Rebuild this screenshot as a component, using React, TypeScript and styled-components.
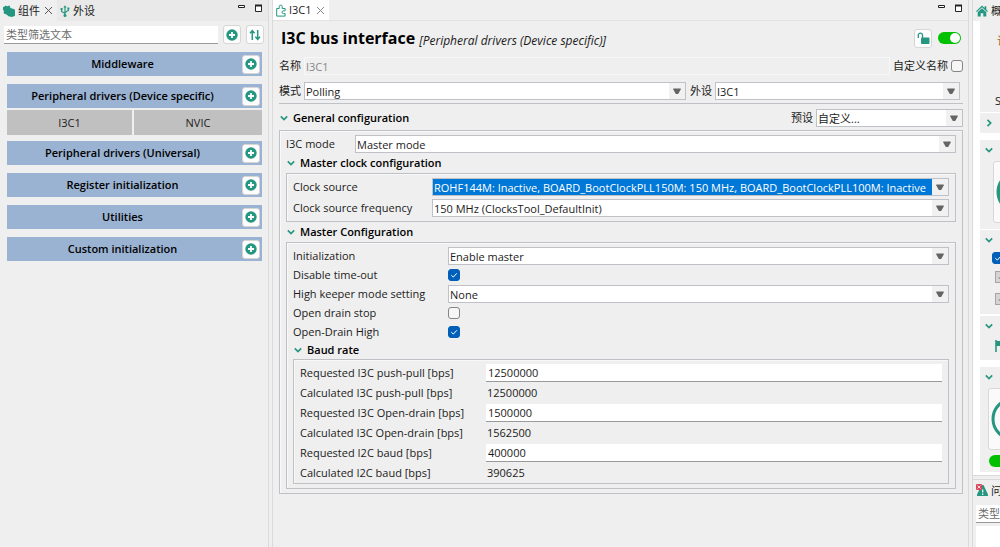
import React, { useId, useState } from "react";
import styled, { createGlobalStyle, css } from "styled-components";

const teal = "#259780";
const line = "#c0c1c6";
const face = "#efefef";

const GlobalStyle = createGlobalStyle`
  * { box-sizing: border-box; }
  body {
    margin: 0;
    background: ${face};
    color: #1b1b1b;
    font-family: "Open Sans", "Noto Sans CJK SC", sans-serif;
    font-size: 11px;
    line-height: 16px;
  }
  button, input, select { font: inherit; color: inherit; margin: 0; }
  h1, h2, h3 { margin: 0; font-weight: 700; color: #000; }
`;

const Workbench = styled.div`
  display: grid;
  grid-template-columns: 269px minmax(0, 1fr) 28px;
  column-gap: 3px;
  min-height: 100vh;
  overflow: hidden;
  background: ${face};
`;

const Panel = styled.section`
  min-width: 0;
  display: flex;
  flex-direction: column;
  border-right: 1px solid #dadada;
`;

const MainPanel = styled(Panel)`
  border-left: 1px solid #dadada;
`;

const TabBar = styled.div`
  display: flex;
  align-items: stretch;
  height: 21px;
  flex: none;
  background: #e9e9e9;
`;

const EditorTabBar = styled(TabBar)`
  background: ${face};
  border-bottom: 1px solid #e2e2e2;
`;

const Tab = styled.div<{ $fill?: string }>`
  display: flex;
  align-items: center;
  gap: 3px;
  padding: 0 4px 0 3px;
  white-space: nowrap;
  background: ${(p) => p.$fill ?? "transparent"};
  svg { flex: none; }
`;

const TabClose = styled.button`
  display: flex;
  padding: 0;
  margin-left: 1px;
  border: 0;
  background: none;
`;

const WindowButtons = styled.div`
  display: flex;
  gap: 8px;
  margin-left: auto;
  padding: 4px 5px 0 0;
`;

const WindowButton = styled.button`
  width: 9px;
  height: 10px;
  padding: 0;
  border: 0;
  background: none;
  display: flex;
`;

const FilterRow = styled.div`
  display: flex;
  align-items: center;
  gap: 5px;
  padding: 4px 4px 0;
`;

const TextField = styled.input`
  min-width: 0;
  width: 100%;
  height: 18px;
  padding: 0 2px;
  border: 0;
  border-bottom: 1px solid #9a9a9a;
  background: #fff;
  outline: 0;
  &::placeholder { color: #6d6d6d; opacity: 1; }
`;

const IconButton = styled.button`
  flex: none;
  display: flex;
  align-items: center;
  justify-content: center;
  width: 18px;
  height: 19px;
  padding: 0;
  border: 1px solid #d6d6d6;
  border-radius: 3px;
  background: #fdfdfd;
`;

const GroupList = styled.div`
  display: flex;
  flex-direction: column;
  gap: 8px;
  padding: 8px 6px 8px 7px;
`;

const GroupHeader = styled.header`
  display: flex;
  align-items: center;
  gap: 6px;
  height: 24px;
  padding: 0 2px;
  background: #9ab3d2;
  h2 {
    flex: 1;
    text-align: center;
    font-size: 11px;
    font-weight: 600;
  }
`;

const GroupItems = styled.div`
  display: grid;
  grid-template-columns: 125px 1fr;
  gap: 2px;
  padding: 2px 0 0;
  margin-bottom: -2px;
`;

const GroupItem = styled.button`
  height: 25px;
  padding: 0;
  border: 0;
  background: #c0c0c0;
`;

const Editor = styled.div`
  padding: 0 5px 0 6px;
`;

const TitleRow = styled.div`
  display: flex;
  align-items: center;
  gap: 4px;
  height: 34px;
  padding: 0 2px;
  margin-bottom: 2px;
  h1 { font-size: 16px; line-height: 24px; }
`;

const Subtitle = styled.em`
  flex: 1;
  padding-top: 6px;
  font-size: 12px;
`;

const Toggle = styled.button`
  flex: none;
  display: flex;
  justify-content: flex-end;
  width: 23px;
  height: 12px;
  padding: 1px;
  margin-left: 2px;
  border: 0;
  border-radius: 6px;
  background: #00c000;
  span {
    width: 10px;
    height: 10px;
    border-radius: 5px;
    background: #fff;
  }
`;

const FieldRow = styled.div<{ $gap?: number }>`
  display: flex;
  align-items: center;
  gap: 3px;
  height: 18px;
  margin-bottom: ${(p) => p.$gap ?? 0}px;
  white-space: nowrap;
`;

const ReadonlyField = styled.input`
  flex: 1;
  min-width: 0;
  height: 18px;
  padding: 0 1px;
  border: 1px solid #f7f7f7;
  background: transparent;
  color: #878787;
`;

const SelectFrame = styled.div`
  position: relative;
  display: flex;
  flex: 1;
  min-width: 0;
  svg {
    position: absolute;
    right: 5px;
    top: 6px;
    pointer-events: none;
  }
`;

const SelectControl = styled.select<{ $marked?: boolean }>`
  appearance: none;
  width: 100%;
  height: 18px;
  padding: 0 16px 0 1px;
  line-height: 15px;
  border: 1px solid ${line};
  border-radius: 0;
  outline: 0;
  background: linear-gradient(to left, #f1f1f1 16px, ${(p) => (p.$marked ? "#0078d7" : "#fff")} 16px);
  ${(p) => p.$marked && css`color: #fff;`}
  option { color: #1b1b1b; background: #fff; }
`;

const Rule = styled.hr`
  height: 1px;
  margin: 3px 0 5px;
  border: 0;
  background: ${line};
`;

const SectionTitle = styled.div<{ $height: number }>`
  display: flex;
  align-items: center;
  height: ${(p) => p.$height}px;
  h2 { flex: 1; font-size: 11px; font-weight: 600; }
`;

const Twisty = styled.button`
  display: flex;
  flex: none;
  padding: 0 5px 0 1px;
  border: 0;
  background: none;
`;

const PresetField = styled.div`
  display: flex;
  align-items: center;
  gap: 3px;
  width: 172px;
  white-space: nowrap;
`;

const PeripheralField = styled.div`
  display: flex;
  align-items: center;
  gap: 3px;
  width: 270px;
  margin-left: 1px;
  margin-right: 3px;
`;

const Frame = styled.div<{ $bottom: number }>`
  padding: 4px 6px ${(p) => p.$bottom}px;
  border: 1px solid ${line};
  box-shadow: inset 1px 1px 0 #f8f8f8;
`;

const GeneralFrame = styled(Frame)`
  margin-top: 3px;
`;

const PropertyGrid = styled.div<{ $label: number; $gap: number }>`
  display: grid;
  grid-template-columns: ${(p) => p.$label}px minmax(0, 1fr);
  row-gap: ${(p) => p.$gap}px;
  align-items: center;
  white-space: nowrap;
`;

const ValueCell = styled.div`
  display: flex;
  align-items: center;
  height: 18px;
`;

const Output = styled.output`
  padding-left: 1px;
  line-height: 18px;
`;

const CheckInput = styled.input`
  appearance: none;
  flex: none;
  width: 12px;
  height: 12px;
  border: 1px solid #858585;
  border-radius: 3px;
  background: #f6f6f6;
  &:checked {
    border-color: #005fb8;
    background: #005fb8
      url("data:image/svg+xml,%3Csvg xmlns='http://www.w3.org/2000/svg' viewBox='0 0 10 10'%3E%3Cpath d='M2.3 5.2l2 1.9 3.5-3.8' fill='none' stroke='white'/%3E%3C/svg%3E");
  }
`;

const Side = styled.aside`
  display: flex;
  flex-direction: column;
  min-width: 0;
  overflow: hidden;
  border-left: 1px solid #dadada;
`;

const Overview = styled.div`
  display: flex;
  flex-direction: column;
  padding: 0 0 3px 7px;
  background: #fff;
  border-bottom: 1px solid #dadada;
`;

const SideSection = styled.section<{ $height: number; $gap: number }>`
  height: ${(p) => p.$height}px;
  margin-bottom: ${(p) => p.$gap}px;
  width: 240px;
  display: flex;
  flex-direction: column;
  align-items: flex-start;
  background: ${face};
`;

const SideHead = styled.button`
  display: flex;
  align-items: center;
  height: 20px;
  padding: 0 5px;
  border: 0;
  background: none;
  flex: none;
`;

const SideText = styled.span<{ $top: number; $left: number; $color?: string }>`
  padding: ${(p) => p.$top}px 0 0 ${(p) => p.$left}px;
  color: ${(p) => p.$color ?? "inherit"};
`;

const Card = styled.div<{ $left: number }>`
  display: flex;
  align-items: center;
  flex: none;
  width: 200px;
  height: 62px;
  margin: 1px 0 0 ${(p) => p.$left}px;
  padding-left: 2px;
  border: 1px solid #d8d8d8;
  border-radius: 3px;
  background: #fafafa;
`;

const SideStack = styled.div`
  display: flex;
  flex-direction: column;
  gap: 5px;
  padding: 2px 0 0 12px;
`;

const MiniButton = styled.button`
  width: 14px;
  height: 12px;
  margin: 2px 0 3px 3px;
  padding: 0 2px;
  border: 1px solid #a5a5a5;
  background: #d4d4d4;
  display: flex;
  align-items: center;
`;

const SideToggle = styled(Toggle)`
  margin: 5px 0 0 9px;
`;

const Problems = styled.div`
  flex: 1;
  display: flex;
  flex-direction: column;
  margin-top: 3px;
  border-top: 1px solid #dadada;
`;

const ProblemFilter = styled.div`
  width: 200px;
  padding: 4px 3px 3px;
`;

const ProblemTable = styled.div`
  flex: 1;
  width: 200px;
  margin-left: 3px;
  background: #fff;
`;

const PlusIcon = () => (
  <svg width="12" height="12" viewBox="0 0 12 12">
    <circle cx="6" cy="6" r="5.7" fill={teal} />
    <path d="M6 3v6M3 6h6" stroke="#fff" strokeWidth="1.8" />
  </svg>
);

const SortIcon = () => (
  <svg width="12" height="12" viewBox="0 0 12 12" fill="none" stroke={teal} strokeWidth="1.5">
    <path d="M3.3 11V2M1 4.2 3.3 1.7 5.6 4.2M8.7 1v9M6.4 7.8l2.3 2.5L11 7.8" />
  </svg>
);

const CloseIcon = ({ color = "#555" }: { color?: string }) => (
  <svg width="9" height="9" viewBox="0 0 9 9" fill="none" stroke={color}>
    <path d="M1 1l7 7M8 1l-7 7" />
  </svg>
);

const ComponentsIcon = () => (
  <svg width="12" height="12" viewBox="0 0 12 12" fill={teal}>
    <path d="M0 2 1.6 1.6 2.600 .6 4 1.300 6.600 .6 7.400 3 9 3.400 11.600 4.200 12 6v4.800L9 12 5.500 11.200 3.600 9.600 .8 8.400V5.600L0 5z" />
  </svg>
);

const UsbIcon = () => (
  <svg width="10" height="12" viewBox="0 0 10 12" fill="none" stroke={teal} strokeWidth="1.2">
    <path d="M5 10V2M5 8.6 1.6 6.5V4.4M5 7.4l3.4-2V3.6" />
    <path d="M3.4 2.6 5 .3l1.6 2.3zM.6 3h2v2h-2zM7.4 2.4h2v2h-2z" fill={teal} stroke="none" />
    <circle cx="5" cy="10.4" r="1.5" fill={teal} stroke="none" />
  </svg>
);

const PuzzleIcon = () => (
  <svg width="10" height="13" viewBox="0 0 10 13" fill="none" stroke={teal}>
    <path d="M.7 4.500h2.500V2.600Q3.200 1.200 4.700 1.200T6.200 2.600v1.900h2.900v2.300H7.500Q6 6.800 6 8.200t1.500 1.400h1.600v2.500H.7z" />
  </svg>
);

const MinimizeIcon = () => (
  <svg width="9" height="10" viewBox="0 0 9 10"><path d="M1.500 1.500h6v2h-6z" fill="#fff" stroke="#222" /></svg>
);

const MaximizeIcon = () => (
  <svg width="9" height="10" viewBox="0 0 9 10">
    <path d="M1.500 1.500h6v6h-6z" fill="#fff" stroke="#222" />
    <path d="M1 1.500h7" stroke="#222" strokeWidth="2" />
  </svg>
);

const UnlockIcon = () => (
  <svg width="13" height="13" viewBox="0 0 13 13">
    <path d="M1.300 6V3.300a2.100 2.100 0 0 1 4.200 0V6" fill="none" stroke={teal} strokeWidth="1.300" />
    <rect x="4" y="5.600" width="8.500" height="6.400" rx="1" fill={teal} />
  </svg>
);

const Chevron = ({ right }: { right?: boolean }) => (
  <svg width="8" height="8" viewBox="0 0 8 8" fill="none" stroke={teal} strokeWidth="1.700">
    <path d={right ? "M2.500 .8 5.700 4 2.500 7.200" : "M.8 2.400 4 5.500l3.200-3.100"} />
  </svg>
);

const GrayCheck = () => (
  <svg width="8" height="8" viewBox="0 0 8 8" fill="none" stroke="#555">
    <path d="M1 4.500l2 2 3.500-3.500" />
  </svg>
);

const DropArrow = () => (
  <svg width="8" height="7" viewBox="0 0 8 7"><path d="M.3.5h7.400v1L5.200 6H2.800L.3 1.500z" fill="#646464" /></svg>
);

const HomeIcon = () => (
  <svg width="12" height="12" viewBox="0 0 12 12" fill={teal}>
    <path d="M6 .4 8.600 2.900V1.200h1.700v3.400L12 6.200l-.9.9L6 2.300.9 7.100 0 6.200z" />
    <path d="M6 3.300 10.300 7.300V11.600H7.300V8.300H4.700v3.300h-3V7.300z" />
  </svg>
);

const ProblemIcon = () => (
  <svg width="12" height="13" viewBox="0 0 12 13">
    <path d="M5.500 1h2L12 10.500V12H1v-1.500z" fill={teal} />
    <path d="M6.700 5.500v3M6.700 9.500V11" stroke="#fff" strokeWidth="1.200" />
    <rect width="6" height="6" rx="1" fill="#d9485a" />
    <path d="M1.500 1.500l3 3M4.500 1.500l-3 3" stroke="#fff" strokeWidth=".8" />
  </svg>
);

const FlagIcon = () => (
  <svg width="14" height="12" viewBox="0 0 14 12">
    <path d="M1 0v12" stroke={teal} strokeWidth="1.600" />
    <path d="M1 1h12v7H7V6H1z" fill={teal} />
  </svg>
);

const Ring = ({ inner }: { inner?: boolean }) => (
  <svg width="44" height="44" viewBox="0 0 44 44">
    <circle cx="22" cy="22" r="20" fill={inner ? teal : "none"} stroke={teal} strokeWidth="3" />
  </svg>
);

function WindowControls() {
  return (
    <WindowButtons>
      <WindowButton aria-label="Minimize"><MinimizeIcon /></WindowButton>
      <WindowButton aria-label="Maximize"><MaximizeIcon /></WindowButton>
    </WindowButtons>
  );
}

function Dropdown({ id, value, marked }: { id: string; value: string; marked?: boolean }) {
  return (
    <SelectFrame>
      <SelectControl id={id} $marked={marked} defaultValue={value}>
        <option value={value}>{value}</option>
      </SelectControl>
      <DropArrow />
    </SelectFrame>
  );
}

function SelectProperty({ label, value, marked }: { label: string; value: string; marked?: boolean }) {
  const id = useId();
  return (
    <>
      <label htmlFor={id}>{label}</label>
      <Dropdown id={id} value={value} marked={marked} />
    </>
  );
}

function CheckProperty({ label, checked }: { label: string; checked?: boolean }) {
  const id = useId();
  return (
    <>
      <label htmlFor={id}>{label}</label>
      <ValueCell><CheckInput id={id} type="checkbox" defaultChecked={checked} /></ValueCell>
    </>
  );
}

function RateProperty({ name, requested, calculated }: { name: string; requested: string; calculated: string }) {
  const id = useId();
  return (
    <>
      <label htmlFor={id}>Requested {name} [bps]</label>
      <TextField id={id} defaultValue={requested} />
      <span>Calculated {name} [bps]</span>
      <Output>{calculated}</Output>
    </>
  );
}

function Heading({ title, height, children }: { title: string; height: number; children?: React.ReactNode }) {
  return (
    <SectionTitle $height={height}>
      <Twisty aria-label={`Collapse ${title}`}><Chevron /></Twisty>
      <h2>{title}</h2>
      {children}
    </SectionTitle>
  );
}

const groups: { name: string; items?: string[] }[] = [
  { name: "Middleware" },
  { name: "Peripheral drivers (Device specific)", items: ["I3C1", "NVIC"] },
  { name: "Peripheral drivers (Universal)" },
  { name: "Register initialization" },
  { name: "Utilities" },
  { name: "Custom initialization" },
];

const rates = [
  { name: "I3C push-pull", requested: "12500000", calculated: "12500000" },
  { name: "I3C Open-drain", requested: "1500000", calculated: "1562500" },
  { name: "I2C baud", requested: "400000", calculated: "390625" },
];

function ComponentsPanel() {
  return (
    <Panel>
      <TabBar>
        <Tab $fill={face}>
          <ComponentsIcon />组件<TabClose aria-label="Close"><CloseIcon /></TabClose>
        </Tab>
        <Tab><UsbIcon />外设</Tab>
        <WindowControls />
      </TabBar>
      <FilterRow>
        <TextField placeholder="类型筛选文本" aria-label="类型筛选文本" />
        <IconButton aria-label="Add"><PlusIcon /></IconButton>
        <IconButton aria-label="Sort"><SortIcon /></IconButton>
      </FilterRow>
      <GroupList>
        {groups.map((g) => (
          <section key={g.name}>
            <GroupHeader>
              <h2>{g.name}</h2>
              <IconButton aria-label={`Add to ${g.name}`}><PlusIcon /></IconButton>
            </GroupHeader>
            {g.items && (
              <GroupItems>
                {g.items.map((i) => <GroupItem key={i}>{i}</GroupItem>)}
              </GroupItems>
            )}
          </section>
        ))}
      </GroupList>
    </Panel>
  );
}

function EditorPanel() {
  const [enabled, setEnabled] = useState(true);
  return (
    <MainPanel as="main">
      <EditorTabBar>
        <Tab $fill="#fff">
          <PuzzleIcon />I3C1<TabClose aria-label="Close"><CloseIcon color="#888" /></TabClose>
        </Tab>
        <WindowControls />
      </EditorTabBar>
      <Editor>
        <TitleRow>
          <h1>I3C bus interface</h1>
          <Subtitle>[Peripheral drivers (Device specific)]</Subtitle>
          <IconButton aria-label="Unlock"><UnlockIcon /></IconButton>
          <Toggle role="switch" aria-label="Enabled" aria-checked={enabled} onClick={() => setEnabled(!enabled)}>
            <span />
          </Toggle>
        </TitleRow>
        <FieldRow $gap={7}>
          <label htmlFor="name">名称</label>
          <ReadonlyField id="name" value="I3C1" readOnly />
          <label htmlFor="custom-name">自定义名称</label>
          <CheckInput id="custom-name" type="checkbox" />
        </FieldRow>
        <FieldRow>
          <label htmlFor="mode">模式</label>
          <Dropdown id="mode" value="Polling" />
          <PeripheralField>
            <label htmlFor="peripheral">外设</label>
            <Dropdown id="peripheral" value="I3C1" />
          </PeripheralField>
        </FieldRow>
        <Rule />
        <Heading title="General configuration" height={18}>
          <PresetField>
            <label htmlFor="preset">预设</label>
            <Dropdown id="preset" value="自定义..." />
          </PresetField>
        </Heading>
        <GeneralFrame $bottom={4}>
          <PropertyGrid $label={69} $gap={0}>
            <SelectProperty label="I3C mode" value="Master mode" />
          </PropertyGrid>
          <Heading title="Master clock configuration" height={20} />
          <Frame $bottom={4}>
            <PropertyGrid $label={139} $gap={3}>
              <SelectProperty
                label="Clock source"
                value="ROHF144M: Inactive, BOARD_BootClockPLL150M: 150 MHz, BOARD_BootClockPLL100M: Inactive"
                marked
              />
              <SelectProperty label="Clock source frequency" value="150 MHz (ClocksTool_DefaultInit)" />
            </PropertyGrid>
          </Frame>
          <Heading title="Master Configuration" height={20} />
          <Frame $bottom={4}>
            <PropertyGrid $label={155} $gap={1}>
              <SelectProperty label="Initialization" value="Enable master" />
              <CheckProperty label="Disable time-out" checked />
              <SelectProperty label="High keeper mode setting" value="None" />
              <CheckProperty label="Open drain stop" />
              <CheckProperty label="Open-Drain High" checked />
            </PropertyGrid>
            <Heading title="Baud rate" height={18} />
            <Frame $bottom={1}>
              <PropertyGrid $label={186} $gap={2}>
                {rates.map((r) => <RateProperty key={r.name} {...r} />)}
              </PropertyGrid>
            </Frame>
          </Frame>
        </GeneralFrame>
      </Editor>
    </MainPanel>
  );
}

function OverviewPanel() {
  return (
    <Side>
      <TabBar>
        <Tab $fill={face}><HomeIcon />概览</Tab>
      </TabBar>
      <Overview>
        <SideSection $height={91} $gap={1}>
          <SideText $top={12} $left={17} $color="#a06a1c">许可</SideText>
          <SideText $top={44} $left={15}>SDK</SideText>
        </SideSection>
        <SideSection $height={20} $gap={7}>
          <SideHead aria-label="Expand"><Chevron right /></SideHead>
        </SideSection>
        <SideSection $height={89} $gap={1}>
          <SideHead aria-label="Collapse"><Chevron /></SideHead>
          <Card $left={13}><Ring inner /></Card>
        </SideSection>
        <SideSection $height={84} $gap={2}>
          <SideHead aria-label="Collapse"><Chevron /></SideHead>
          <SideStack>
            <CheckInput type="checkbox" defaultChecked aria-label="Functional group" />
            <MiniButton aria-label="Group option"><GrayCheck /></MiniButton>
            <MiniButton aria-label="Group option"><GrayCheck /></MiniButton>
          </SideStack>
        </SideSection>
        <SideSection $height={44} $gap={7}>
          <SideHead aria-label="Collapse"><Chevron /></SideHead>
          <SideText $top={4} $left={15}><FlagIcon /></SideText>
        </SideSection>
        <SideSection $height={105} $gap={0}>
          <SideHead aria-label="Collapse"><Chevron /></SideHead>
          <Card $left={8}><Ring /></Card>
          <SideToggle role="switch" aria-checked aria-label="Tool enabled"><span /></SideToggle>
        </SideSection>
      </Overview>
      <Problems>
        <TabBar>
          <Tab $fill={face}><ProblemIcon />问题</Tab>
        </TabBar>
        <ProblemFilter>
          <TextField placeholder="类型筛选文本" aria-label="问题 类型筛选文本" />
        </ProblemFilter>
        <ProblemTable />
      </Problems>
    </Side>
  );
}

export default function App() {
  return (
    <>
      <GlobalStyle />
      <Workbench>
        <ComponentsPanel />
        <EditorPanel />
        <OverviewPanel />
      </Workbench>
    </>
  );
}
